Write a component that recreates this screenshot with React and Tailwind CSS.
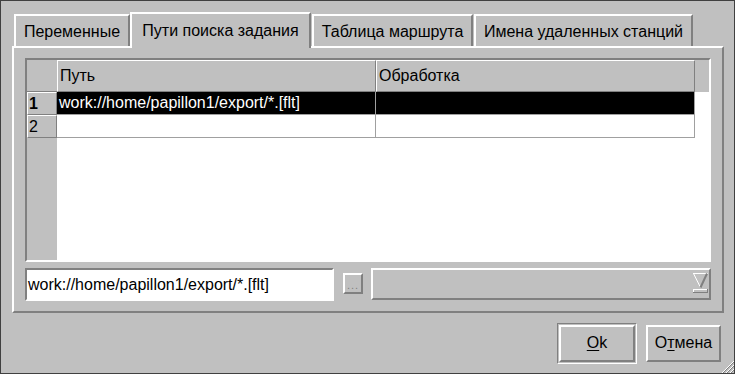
const tabs = [
  { label: 'Переменные', cls: 'w-[116px] ml-[2px]' },
  { label: 'Пути поиска задания', cls: 'w-[181px]', active: true },
  { label: 'Таблица маршрута', cls: 'w-[161px] ml-[1px]' },
  { label: 'Имена удаленных станций', cls: 'w-[219px] ml-[1px]' },
];

const rows = [
  { n: '1', path: 'work://home/papillon1/export/*.[flt]', selected: true },
  { n: '2', path: '' },
];

const raised = 'border-t-white border-l-white border-b-[#808080] border-r-[#808080]';
const sunken = 'border-t-[#808080] border-l-[#808080] border-b-white border-r-white';

const Tab = ({ label, cls, active }) => (
  <div
    className={`${cls} flex items-center justify-center border-t-2 border-l-2 border-r-2 border-t-white border-l-white border-r-[#808080] ${
      active ? 'h-[36px] -mb-[2px] relative z-10 bg-[#c0c0c0] pb-[1px]' : 'h-[32px] pt-[2px]'
    }`}
  >
    {label}
  </div>
);

const ComboArrow = () => (
  <svg width="15" height="21" viewBox="0 0 15 21">
    <line x1="0" y1="0.5" x2="15" y2="0.5" stroke="#ffffff" />
    <line x1="0.5" y1="0.5" x2="7.5" y2="14.5" stroke="#ffffff" />
    <line x1="14" y1="0.5" x2="7.5" y2="14.5" stroke="#808080" strokeWidth="2" />
    <rect x="0" y="16" width="15" height="4" fill="#c0c0c0" />
    <line x1="0" y1="16.5" x2="15" y2="16.5" stroke="#ffffff" />
    <line x1="0.5" y1="16" x2="0.5" y2="20" stroke="#ffffff" />
    <line x1="0" y1="19.5" x2="15" y2="19.5" stroke="#808080" />
    <line x1="14.5" y1="16" x2="14.5" y2="20" stroke="#808080" />
  </svg>
);

const SizeGrip = () => (
  <svg width="13" height="13" viewBox="0 0 13 13" className="absolute right-0 bottom-0">
    <line x1="13" y1="1" x2="1" y2="13" stroke="#ffffff" />
    <line x1="13" y1="2" x2="2" y2="13" stroke="#808080" />
    <line x1="13" y1="5" x2="5" y2="13" stroke="#ffffff" />
    <line x1="13" y1="6" x2="6" y2="13" stroke="#808080" />
    <line x1="13" y1="9" x2="9" y2="13" stroke="#ffffff" />
    <line x1="13" y1="10" x2="10" y2="13" stroke="#808080" />
  </svg>
);

export default function App() {
  return (
    <div className="relative w-[735px] h-[374px] bg-[#c0c0c0] border border-[#404040] pl-[11px] pr-[10px] pt-[11px] flex flex-col text-[16px] text-black font-['Liberation_Sans',Arial,sans-serif] leading-none overflow-hidden">
      {/* tab bar */}
      <div className="flex items-end h-[34px]">
        {tabs.map((t) => (
          <Tab key={t.label} {...t} />
        ))}
      </div>

      {/* tab page */}
      <div className={`h-[267px] border-2 ${raised} flex flex-col px-[11px] pt-[10px] pb-[10px]`}>
        <div className={`h-[204px] border-2 ${sunken} flex flex-col`}>
          <div className="flex h-[32px] shrink-0">
            <div className="w-[30px] border-b border-[#808080]" />
            <div className={`w-[319px] border ${raised} flex items-center pl-[2px]`}>Путь</div>
            <div className={`w-[319px] border ${raised} flex items-center pl-[2px]`}>Обработка</div>
            <div className="flex-1" />
          </div>
          <div className="flex flex-1 min-h-0">
            <div className="w-[30px] flex flex-col">
              {rows.map((r) => (
                <div
                  key={r.n}
                  className={`h-[23px] border ${raised} flex items-center pl-[1px] ${r.selected ? 'font-bold' : ''}`}
                >
                  {r.n}
                </div>
              ))}
            </div>
            <div className="flex-1 bg-white">
              {rows.map((r) => (
                <div key={r.n} className={`flex h-[23px] ${r.selected ? 'text-white' : ''}`}>
                  <div
                    className={`w-[319px] border-r border-b border-[#a0a0a0] flex items-center pl-[2px] ${
                      r.selected ? 'bg-black' : ''
                    }`}
                  >
                    {r.path}
                  </div>
                  <div className={`w-[319px] border-r border-b border-[#a0a0a0] ${r.selected ? 'bg-black' : ''}`} />
                </div>
              ))}
            </div>
          </div>
        </div>

        <div className="flex items-start mt-[6px] h-[33px]">
          <div className={`w-[309px] h-[33px] border-2 ${sunken} bg-white flex items-center pl-[1px]`}>
            work://home/papillon1/export/*.[flt]
          </div>
          <div className={`ml-[9px] mt-[5px] w-[20px] h-[21px] border-2 ${raised} flex items-end justify-center pb-[1px]`}>
            <span className="text-[11px] text-[#808080] tracking-[1px]">...</span>
          </div>
          <div className={`ml-[8px] flex-1 h-[32px] border-2 ${raised} flex items-start justify-end pt-[3px] pr-[1px]`}>
            <ComboArrow />
          </div>
        </div>
      </div>

      {/* buttons */}
      <div className="flex-1 flex items-center justify-end gap-[9px] pr-[3px]">
        <div className="border border-t-[#808080] border-l-[#808080] border-b-white border-r-white p-[1px]">
          <div className={`w-[76px] h-[37px] border-2 ${raised} flex items-center justify-center`}>
            <span>
              <span className="underline underline-offset-2">O</span>k
            </span>
          </div>
        </div>
        <div className={`w-[75px] h-[37px] border-2 ${raised} flex items-center justify-center`}>
          <span>
            О<span className="underline underline-offset-2">т</span>мена
          </span>
        </div>
      </div>

      <SizeGrip />
    </div>
  );
}
